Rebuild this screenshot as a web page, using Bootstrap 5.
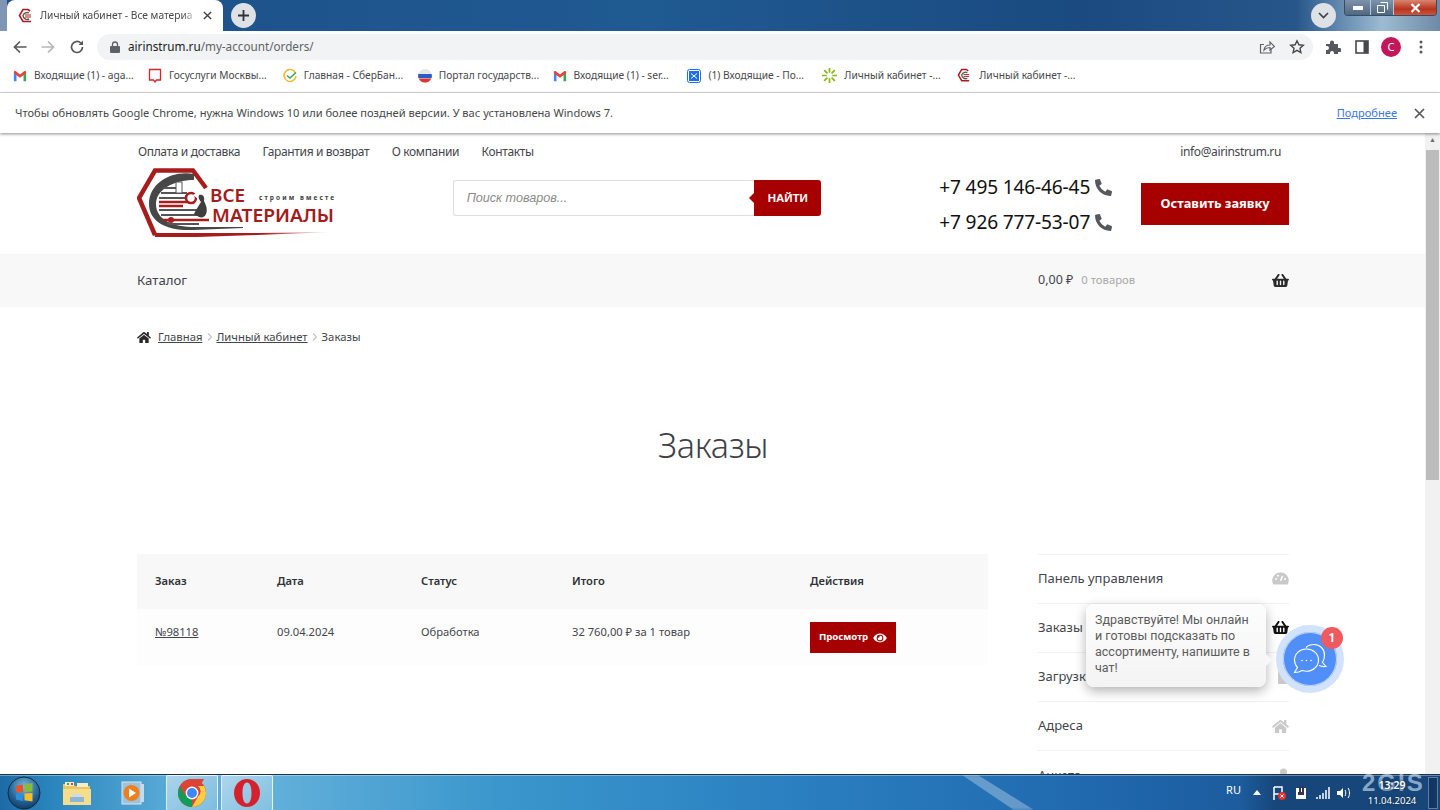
<!DOCTYPE html>
<html lang="ru">
<head>
<meta charset="UTF-8" />
<meta name="viewport" content="width=device-width, initial-scale=1.0" />
<title>Заказы</title>
<link rel="stylesheet" href="https://cdn.jsdelivr.net/npm/bootstrap@5.3.0/dist/css/bootstrap.min.css" />
<style>
  html, body { height: 810px; overflow: hidden; }
  body { font-family: "Noto Sans", "Liberation Sans", sans-serif; background: #fff; color: #43454b; }
  .screen { height: 810px; }

  /* browser frame */
  .tabstrip { height: 31px; background: linear-gradient(90deg, #7f95b4 0, #7f95b4 7px, #1d4f88 7px, #1f5a91 45%, #1a4a80 75%, #26568a 90%, #9dbbd2 96%, #6e8aa6 100%); }
  .tab-active { width: 216px; height: 31px; margin-left: 7px; background: #fff; border-radius: 8px 8px 0 0; padding: 0 11px; font-size: 10.2px; color: #45474a; }
  .tab-title { width: 158px; margin-left: 6px; white-space: nowrap; -webkit-mask-image: linear-gradient(90deg, #000 90%, transparent); mask-image: linear-gradient(90deg, #000 90%, transparent); }
  .round-btn { width: 25px; height: 25px; border-radius: 50%; background: #dee1e6; }
  .win-btns { height: 16px; width: 93px; margin-left: 8px; margin-right: 3px; border: 1px solid #3b4a5c; border-top: 0; border-radius: 0 0 4px 4px; overflow: hidden; }
  .win-btn { background: linear-gradient(#7d93aa, #4e6782); border-right: 1px solid #b9c6d4; }
  .win-min { width: 26px; }
  .win-max { width: 23px; }
  .win-close { flex: 1; background: linear-gradient(#d9866f, #b8341f 60%, #c9553f); border: 0; }

  .toolbar { height: 29px; background: #fff; padding: 3px 0 0 12px; }
  .omnibox { width: 1216px; height: 26px; margin-left: 12px; border-radius: 13px; background: #f1f3f4; padding: 0 8px 0 13px; font-size: 11.7px; color: #5f6368; }
  .omnibox-host { color: #202124; }
  .tool-ico { width: 16px; height: 16px; }
  .fwd-ico { margin-left: 12px; }
  .reload-ico { margin-left: 13px; }
  .star-ico { margin-left: 14px; }
  .ext-ico { margin-left: 12px; }
  .panel-ico { margin-left: 13px; }
  .avatar { width: 20px; height: 20px; margin-left: 11px; background: #c2185b; color: #fff; font-size: 11px; }
  .dots-ico { margin-left: 18px; }

  .bookmarks { height: 33px; padding-left: 13px; border-bottom: 1px solid #dcdcdc; font-size: 10.2px; color: #46484c; }
  .bm-item { width: 134.9px; gap: 7px; white-space: nowrap; }

  .infobar { height: 40px; padding: 0 15px; font-size: 11.1px; color: #45474a; box-shadow: 0 1px 3px rgba(0,0,0,.45); position: relative; z-index: 2; }
  .infobar-link { color: #3b78e7; margin-right: 17px; }

  /* site */
  .page-area { height: 641px; overflow: hidden; position: relative; }
  .site { width: 1425px; overflow: hidden; }
  .scroll-track { width: 15px; background: #f1f1f1; padding: 0 1px; }
  .scroll-arrow { height: 14px; color: #6e6e6e; font-size: 7px; line-height: 14px; text-align: center; }
  .scroll-thumb { height: 330px; margin-top: 3px; background: #bcbcbc; }
  .wrap { width: 1152px; margin-left: 137px; }
  .top-links { height: 35px; font-size: 12px; letter-spacing: -.36px; color: #43454b; padding-top: 3px; }
  .top-link { margin-right: 22.5px; }
  .top-link:first-child { margin-left: 1px; }
  .head-row { height: 86px; padding-bottom: 16px; }
  .logo-box { width: 316px; }
  .search-box { width: 369px; height: 36px; margin-top: -10px; border: 1px solid #dedede; border-right: 0; border-radius: 3px; }
  .search-input { flex: 1; padding-left: 13px; font: italic 12.6px "Liberation Sans", sans-serif; color: #8b8b8b; }
  .search-btn { position: relative; width: 67px; height: 36px; margin: -1px 0; background: #a60000; color: #fff; font: bold 11.5px "Liberation Sans", sans-serif; border-radius: 0 3px 3px 0; }
  .search-btn::before { content: ""; position: absolute; left: -5px; top: 13px; border: 5px solid transparent; border-left: 0; border-right-color: #a60000; }
  .phones { width: 173px; margin-left: 118px; margin-top: 4px; font-size: 19.1px; line-height: 35px; color: #111; letter-spacing: -.15px; white-space: nowrap; }
  .phone-row { gap: 5px; }
  .cta { width: 148px; height: 42px; margin-left: 29px; margin-top: 2px; background: #a60000; color: #fff; font-size: 12.8px; font-weight: 700; }
  .cat-strip { height: 53px; background: #f8f8f8; font-size: 13.2px; }
  .cart-sum { width: 251px; font-size: 12.5px; }
  .cart-count { color: #a9a9a9; margin-left: 8px; font-size: 11.3px; }
  .crumbs { margin-top: 20px; height: 20px; font-size: 11.3px; }
  .crumbs a { color: #43454b; }
  .crumb-home { margin-right: 7px; }
  .crumb-sep { margin: 0 4.5px; }
  .page-title { margin: 77px 0 88px; height: 42px; line-height: 42px; text-align: center; font-family: "Noto Sans", sans-serif; font-weight: 300; font-size: 34.200px; color: #3f4146; letter-spacing: -.3px; }
  .orders-wrap { width: 851px; }
  .orders { table-layout: fixed; font-size: 11.2px; margin: 0; --bs-table-bg: transparent; color: #43454b; }
  .orders th, .orders td { border: 0; padding: 0 0 0 18px; color: #43454b; }
  .orders th { height: 55px; background: #f8f8f8; font-weight: 600; vertical-align: middle; color: #2f3136; }
  .orders td { height: 56px; background: #fdfdfd; padding-top: 15px; vertical-align: top; }
  .orders td a { color: #43454b; }
  .view-btn { width: 86px; height: 31px; margin-top: -2px; background: #a60000; color: #fff; font-size: 9.600px; font-weight: 700; gap: 5px; }
  .side-menu { width: 251px; font-size: 13px; }
  .side-item { height: 49.3px; border-top: 1px solid #f1f1f1; }
  .side-item:first-child { height: 48.500px; }

  /* chat widget */
  .chat-tip { position: absolute; left: 1086px; top: 471px; width: 180px; height: 83px; padding: 8px 9px; background: linear-gradient(#fdfdfd, #f4f4f4); border-radius: 8px; font: 12.5px/16px Roboto, sans-serif; color: #5c5c5c; box-shadow: 0 4px 12px rgba(0,0,0,.3); }
  .chat-tip::after { content: ""; position: absolute; right: -6px; top: 50px; border: 6px solid transparent; border-right: 0; border-left-color: #f8f8f8; }
  .chat-btn { position: absolute; left: 1276px; top: 492px; width: 68px; height: 68px; border-radius: 50%; background: #4f8ff7; border: 7px solid #d3e2fb; box-shadow: inset 0 0 0 1px #bcd3fa; }
  .chat-badge { position: absolute; left: 1321px; top: 494px; width: 22px; height: 22px; border-radius: 50%; background: #ee5a5f; color: #fff; font: bold 12px/22px Roboto, sans-serif; text-align: center; }

  /* taskbar */
  .taskbar { height: 36px; position: relative; z-index: 3; border-top: 1px solid #18344f; box-shadow: inset 0 1px 0 rgba(255,255,255,.35); background: linear-gradient(90deg, #1d6aa6 0, #2a85bd 50px, #58aad6 166px, #62b0da 270px, #3a96cc 500px, #2a7fc0 800px, #2068ae 1100px, #1c5c9e 1240px, #17477a 1275px, #17477a 100%); color: #fff; }
  .taskbar::before { content: ""; position: absolute; left: 962px; top: 0; width: 72px; height: 100%; background: rgba(255,255,255,.3); clip-path: polygon(0 0, 22% 0, 100% 100%, 72% 100%); filter: blur(1.5px); }
  .orb-slot { width: 48px; }
  .folder-slot { width: 58px; }
  .player-slot { width: 54px; margin-right: 6px; }
  .task-slot { width: 52px; height: 36px; }
  .task-on { border: 1px solid rgba(255,255,255,.75); border-radius: 2px; background: linear-gradient(135deg, rgba(255,255,255,.5), rgba(255,255,255,.2)); margin-right: 3px; }
  .tray { position: relative; z-index: 1; margin-left: auto; font-size: 11px; padding-right: 2px; }
  .tray-lang { margin-bottom: 4px; }
  .tray-caret { margin-left: 12px; }
  .tray-flag { margin-left: 11px; }
  .tray-power { margin-left: 9px; }
  .tray-signal { margin-left: 8px; }
  .tray-volume { margin-left: 7px; }
  .clock { width: 58px; margin-left: 12px; text-align: center; font-size: 9.500px; line-height: 15px; text-shadow: 0 0 3px #123; }
  .clock-time { font-size: 10.5px; font-weight: 600; }
  .show-desk { width: 10px; height: 32px; margin-left: 7px; border: 1px solid rgba(255,255,255,.35); background: rgba(10,40,80,.5); }
  .gis-mark { position: absolute; left: 1362px; top: -3px; font: bold 24px/22px "Liberation Sans", sans-serif; letter-spacing: 2px; color: rgba(190,212,235,.7); pointer-events: none; }
</style>
</head>
<body>
<svg width="0" height="0" class="d-block">
  <defs>
    <symbol id="i-basket" viewBox="0 0 576 512"><path fill="currentColor" d="M576 216v16c0 13.255-10.745 24-24 24h-8l-26.113 182.788C514.509 462.435 494.257 480 470.37 480H105.63c-23.887 0-44.139-17.565-47.518-41.212L32 256h-8c-13.255 0-24-10.745-24-24v-16c0-13.255 10.745-24 24-24h67.341l106.78-146.821c10.395-14.292 30.407-17.453 44.701-7.058 14.293 10.395 17.453 30.408 7.058 44.701L170.477 192h235.046L326.12 82.821c-10.395-14.292-7.234-34.306 7.059-44.701 14.291-10.395 34.306-7.235 44.701 7.058L484.659 192H552c13.255 0 24 10.745 24 24zM312 392V280c0-13.255-10.745-24-24-24s-24 10.745-24 24v112c0 13.255 10.745 24 24 24s24-10.745 24-24zm112 0V280c0-13.255-10.745-24-24-24s-24 10.745-24 24v112c0 13.255 10.745 24 24 24s24-10.745 24-24zm-224 0V280c0-13.255-10.745-24-24-24s-24 10.745-24 24v112c0 13.255 10.745 24 24 24s24-10.745 24-24z"/></symbol>
    <symbol id="i-phone" viewBox="0 0 512 512"><path fill="currentColor" d="M497.39 361.8l-112-48a24 24 0 0 0-28 6.9l-49.6 60.6A370.66 370.66 0 0 1 130.6 204.11l60.6-49.6a23.94 23.94 0 0 0 6.9-28l-48-112A24.16 24.16 0 0 0 122.6.61l-104 24A24 24 0 0 0 0 48c0 256.5 207.9 464 464 464a24 24 0 0 0 23.4-18.6l24-104a24.29 24.29 0 0 0-14.01-27.6z"/></symbol>
    <symbol id="i-home" viewBox="0 0 576 512"><path fill="currentColor" d="M280.37 148.26L96 300.11V464a16 16 0 0 0 16 16l112.06-.29a16 16 0 0 0 15.92-16V368a16 16 0 0 1 16-16h64a16 16 0 0 1 16 16v95.64a16 16 0 0 0 16 16.05L464 480a16 16 0 0 0 16-16V300L295.67 148.26a12.19 12.19 0 0 0-15.3 0zM571.6 251.47L488 182.56V44.05a12 12 0 0 0-12-12h-56a12 12 0 0 0-12 12v72.61L318.47 43a48 48 0 0 0-61 0L4.34 251.47a12 12 0 0 0-1.6 16.9l25.5 31A12 12 0 0 0 45.15 301l235.22-193.74a12.19 12.19 0 0 1 15.3 0L530.9 301a12 12 0 0 0 16.9-1.6l25.5-31a12 12 0 0 0-1.7-16.93z"/></symbol>
    <symbol id="i-eye" viewBox="0 0 576 512"><path fill="currentColor" d="M572.52 241.4C518.29 135.59 410.93 64 288 64S57.68 135.64 3.48 241.41a32.4 32.4 0 0 0 0 29.19C57.71 376.41 165.07 448 288 448s230.32-71.64 284.52-177.41a32.4 32.4 0 0 0 0-29.19zM288 400a144 144 0 1 1 144-144 143.93 143.93 0 0 1-144 144zm0-240a95.31 95.31 0 0 0-25.31 3.79 47.85 47.85 0 0 1-66.9 66.9A95.78 95.78 0 1 0 288 160z"/></symbol>
    <symbol id="i-gmail" viewBox="0 0 16 16"><path fill="#4285f4" d="M1 14V4l3 2v8z"/><path fill="#34a853" d="M12 14V6l3-2v10z"/><path fill="#ea4335" d="M4 7 1 4.6V3.4C1 2.3 2.3 1.8 3 2.4L8 6.2l5-3.8c.7-.6 2-.1 2 1v1.2L12 7 8 10z"/></symbol>
    <symbol id="i-nut" viewBox="0 0 16 16"><path fill="none" stroke="#a81c1c" stroke-width="1.6" d="M12 3 10 1.5H5L1.5 7.5 5 13.5h8"/><path fill="none" stroke="#555" stroke-width="1.4" d="M11 5A4.2 4.2 0 0 0 5 7.500 4.200 4.200 0 0 0 11 11"/><path stroke="#a81c1c" d="M7 7h6M7 9h6"/></symbol>
    <symbol id="i-chevron" viewBox="0 0 5 8"><path d="M1 .5 4.500 4 1 7.500" fill="none" stroke="#c4c4c4" stroke-width="1.200"/></symbol>
  </defs>
</svg>

<div class="screen d-flex flex-column">
  <!-- вкладки -->
  <div class="tabstrip d-flex align-items-center flex-shrink-0">
    <div class="tab-active d-flex align-items-center">
      <svg width="16" height="16" class="flex-shrink-0"><use href="#i-nut"/></svg>
      <span class="tab-title">Личный кабинет - Все материа</span>
      <svg class="ms-auto flex-shrink-0" width="9" height="9" viewBox="0 0 10 10"><path d="M1 1l8 8M9 1l-8 8" stroke="#3c4043" stroke-width="1.5"/></svg>
    </div>
    <div class="round-btn d-flex align-items-center justify-content-center ms-2">
      <svg width="13" height="13" viewBox="0 0 13 13"><path d="M6.500 1v11M1 6.500h11" stroke="#303236" stroke-width="1.800"/></svg>
    </div>
    <div class="round-btn d-flex align-items-center justify-content-center ms-auto">
      <svg width="11" height="7" viewBox="0 0 11 7"><path d="M1 1l4.500 4.500L10 1" fill="none" stroke="#3c4043" stroke-width="1.600"/></svg>
    </div>
    <div class="win-btns d-flex align-self-start">
      <div class="win-btn win-min d-flex align-items-center justify-content-center"><svg width="10" height="4"><rect width="10" height="4" fill="#fff"/></svg></div>
      <div class="win-btn win-max d-flex align-items-center justify-content-center"><svg width="11" height="11" viewBox="0 0 11 11"><path d="M3.500 .5h7v7M.5 3.500h7v7h-7z" fill="none" stroke="#fff"/></svg></div>
      <div class="win-btn win-close d-flex align-items-center justify-content-center"><svg width="11" height="10" viewBox="0 0 11 10"><path d="M1.500 1l8 8M9.500 1l-8 8" stroke="#fff" stroke-width="2.200"/></svg></div>
    </div>
  </div>

  <!-- адресная строка -->
  <div class="toolbar d-flex align-items-center flex-shrink-0">
    <svg class="tool-ico" viewBox="0 0 16 16"><path d="M14.500 8H2.500M8 2.500 2.500 8 8 13.500" fill="none" stroke="#55585c" stroke-width="1.700"/></svg>
    <svg class="tool-ico fwd-ico" viewBox="0 0 16 16"><path d="M1.500 8h12M8 2.500 13.500 8 8 13.500" fill="none" stroke="#b5b7ba" stroke-width="1.700"/></svg>
    <svg class="tool-ico reload-ico" viewBox="0 0 16 16"><path d="M13.500 8A5.500 5.500 0 1 1 11.800 4" fill="none" stroke="#55585c" stroke-width="1.700"/><path d="M14 1.500V6H9.500z" fill="#55585c"/></svg>
    <div class="omnibox d-flex align-items-center">
      <svg width="10" height="12" viewBox="0 0 10 12" class="me-2"><rect y="5" width="10" height="7" rx="1" fill="#5f6368"/><path d="M2.500 5V3.500a2.500 2.500 0 0 1 5 0V5" fill="none" stroke="#5f6368" stroke-width="1.300"/></svg>
      <span><span class="omnibox-host">airinstrum.ru</span>/my-account/orders/</span>
      <svg class="tool-ico ms-auto" viewBox="0 0 16 16"><path d="M12 9.500V14H1.500V5.500H5" fill="none" stroke="#5f6368" stroke-width="1.200"/><path d="M5 11c.5-3.500 3-5 6-5V3l4.500 4.500L11 11V8.500c-2.500 0-4.500 1-6 2.500z" fill="none" stroke="#5f6368" stroke-width="1.200"/></svg>
      <svg class="tool-ico star-ico" viewBox="0 0 16 16"><path d="M8 1.800l1.900 4 4.400.5-3.300 3 .9 4.300L8 11.400l-3.900 2.200.9-4.300-3.300-3 4.400-.5z" fill="none" stroke="#45484c" stroke-width="1.400"/></svg>
    </div>
    <svg class="tool-ico ext-ico" viewBox="0 0 16 16"><path d="M1 5h4V3.500a2 2 0 0 1 4 0V5h4v4h1.500a2 2 0 0 1 0 4H13v2H9v-1a2 2 0 0 0-4 0v1H1v-4h1a2 2 0 0 0 0-4H1z" fill="#55585c"/></svg>
    <svg class="tool-ico panel-ico" viewBox="0 0 16 16"><rect x="2" y="2" width="12" height="12" fill="none" stroke="#45484c" stroke-width="1.600"/><rect x="9.500" y="2" width="4.500" height="12" fill="#45484c"/></svg>
    <div class="avatar d-flex align-items-center justify-content-center rounded-circle">C</div>
    <svg class="dots-ico" width="4" height="14" viewBox="0 0 4 14"><circle cx="2" cy="2" r="1.500" fill="#55585c"/><circle cx="2" cy="7" r="1.500" fill="#55585c"/><circle cx="2" cy="12" r="1.500" fill="#55585c"/></svg>
  </div>

  <!-- закладки -->
  <div class="bookmarks d-flex align-items-center flex-shrink-0">
    <div class="bm-item d-flex align-items-center"><svg width="14" height="14"><use href="#i-gmail"/></svg><span>Входящие (1) - aga...</span></div>
    <div class="bm-item d-flex align-items-center"><svg width="14" height="16" viewBox="0 0 14 16"><path d="M1.500 1.500h11v10.500h-4l-1.500 2-1.500-2h-4z" fill="none" stroke="#d8232a" stroke-width="1.300"/></svg><span>Госуслуги Москвы...</span></div>
    <div class="bm-item d-flex align-items-center"><svg width="14" height="14" viewBox="0 0 14 14"><path d="M12.500 4A6 6 0 1 0 13 7" fill="none" stroke="#f2b632" stroke-width="1.500"/><path d="M4 6.500l3 2.500 6-5.500" fill="none" stroke="#2faa4f" stroke-width="1.500"/></svg><span>Главная - СберБан...</span></div>
    <div class="bm-item d-flex align-items-center"><svg width="14" height="14" viewBox="0 0 14 14"><circle cx="7" cy="7" r="7" fill="#e6e6e6"/><path d="M.4 5h13.200a7 7 0 0 1 0 4H.4a7 7 0 0 1 0-4z" fill="#2a5cc4"/><path d="M.7 9.500h12.600A7 7 0 0 1 .7 9.500z" fill="#d9353a"/></svg><span>Портал государств...</span></div>
    <div class="bm-item d-flex align-items-center"><svg width="14" height="14"><use href="#i-gmail"/></svg><span>Входящие (1) - ser...</span></div>
    <div class="bm-item d-flex align-items-center"><svg width="14" height="14" viewBox="0 0 14 14"><rect x=".5" y=".5" width="13" height="13" rx="2" fill="#fff" stroke="#1b6fe8"/><rect x="2" y="2" width="10" height="10" fill="#1b6fe8"/><path d="M4 4.500l3 2.500 3-2.500M4 9.500l3-2.500 3 2.500" fill="none" stroke="#fff"/></svg><span>(1) Входящие - По...</span></div>
    <div class="bm-item d-flex align-items-center"><svg width="15" height="15" viewBox="0 0 16 16"><path d="M8 0v5M8 11v5M0 8h5M11 8h5M2.300 2.300l3.500 3.500M10.200 10.200l3.500 3.500M13.700 2.300l-3.500 3.500M5.800 10.200l-3.500 3.500" stroke="#86b817" stroke-width="1.800"/></svg><span>Личный кабинет -...</span></div>
    <div class="bm-item d-flex align-items-center"><svg width="15" height="15"><use href="#i-nut"/></svg><span>Личный кабинет -...</span></div>
  </div>

  <!-- уведомление хрома -->
  <div class="infobar d-flex align-items-center flex-shrink-0">
    <span>Чтобы обновлять Google Chrome, нужна Windows 10 или более поздней версии. У вас установлена Windows 7.</span>
    <a class="infobar-link ms-auto" href="#">Подробнее</a>
    <svg width="11" height="11" viewBox="0 0 11 11"><path d="M1 1l9 9M10 1l-9 9" stroke="#55585c" stroke-width="1.700"/></svg>
  </div>

  <!-- страница -->
  <div class="page-area d-flex flex-shrink-0">
    <div class="site">
      <div class="wrap">
        <div class="top-links d-flex align-items-center">
          <span class="top-link">Оплата и доставка</span>
          <span class="top-link">Гарантия и возврат</span>
          <span class="top-link">О компании</span>
          <span class="top-link">Контакты</span>
          <span class="ms-auto me-2">info@airinstrum.ru</span>
        </div>
        <div class="head-row d-flex align-items-center">
          <div class="logo-box">
            <svg width="200" height="70" viewBox="0 0 200 70" class="d-block">
              <defs><linearGradient id="fade" x1="0" x2="1" y1="0" y2="0"><stop offset="0" stop-color="#a81c1c"/><stop offset=".6" stop-color="#a81c1c"/><stop offset="1" stop-color="#a81c1c" stop-opacity="0"/></linearGradient></defs>
              <path d="M69 20 56 2.500H18L2 30 18 67" fill="none" stroke="#a81c1c" stroke-width="4.500"/>
              <path d="M17 65H120L198 64 120 67 60 69H18z" fill="url(#fade)"/>
              <path d="M57 6C36 2 12 14 12 36 12 54 30 63 56 62L106 60V59H58C36 59 19 52 19 36 19 22 36 12 57 12z" fill="#474747"/>
              <path d="M26 20H44M24 25H50M22 30H50M22 42H60M24 47H66M30 56H62" stroke="#555" stroke-width="2.200"/>
              <path d="M22 34H58M22 38H46M26 52H72" stroke="#a81c1c" stroke-width="2.400"/>
              <rect x="39" y="14" width="6" height="11" fill="#fff" stroke="#555"/>
              <circle cx="54" cy="30" r="5" fill="#fff" stroke="#a81c1c" stroke-width="2.600"/>
              <path d="M56 27l5-3v7z" fill="#fff"/>
              <circle cx="34" cy="52" r="3" fill="#a81c1c"/>
              <path d="M62 27c4-1 6 2 5 6 2 4 4 9 2 13-1 3-4 4-7 3l-5-3 2-4 5-8c-2-2-3-5-2-7z" fill="#3e3e3e"/>
              <text x="73" y="34" textLength="35" lengthAdjust="spacingAndGlyphs" font-family="Noto Sans, sans-serif" font-size="18" font-weight="600" fill="#a31c1c">ВСЕ</text>
              <text x="122" y="32" textLength="75" lengthAdjust="spacing" font-family="Noto Sans, sans-serif" font-size="6.500" font-weight="700" fill="#3e3e3e">строим вместе</text>
              <text x="75" y="54" textLength="122" lengthAdjust="spacingAndGlyphs" font-family="Noto Sans, sans-serif" font-size="18" font-weight="600" fill="#a31c1c">МАТЕРИАЛЫ</text>
            </svg>
          </div>
          <div class="search-box d-flex align-items-center">
            <span class="search-input">Поиск товаров...</span>
            <span class="search-btn d-flex align-items-center justify-content-center">НАЙТИ</span>
          </div>
          <div class="phones">
            <div class="phone-row d-flex align-items-center">+7 495 146-46-45 <svg width="17" height="17"><use href="#i-phone" color="#55585c"/></svg></div>
            <div class="phone-row d-flex align-items-center">+7 926 777-53-07 <svg width="17" height="17"><use href="#i-phone" color="#55585c"/></svg></div>
          </div>
          <div class="cta d-flex align-items-center justify-content-center">Оставить заявку</div>
        </div>
      </div>

      <div class="cat-strip">
        <div class="wrap h-100 d-flex align-items-center justify-content-between">
          <span>Каталог</span>
          <div class="cart-sum d-flex align-items-center">
            <span>0,00 ₽</span><span class="cart-count">0 товаров</span>
            <svg class="ms-auto" width="17" height="15" color="#2a2a2a"><use href="#i-basket"/></svg>
          </div>
        </div>
      </div>

      <div class="wrap">
        <div class="crumbs d-flex align-items-center">
          <svg width="14" height="13" color="#2a2a2a" class="crumb-home"><use href="#i-home"/></svg>
          <a href="#">Главная</a><svg class="crumb-sep" width="5" height="8"><use href="#i-chevron"/></svg>
          <a href="#">Личный кабинет</a><svg class="crumb-sep" width="5" height="8"><use href="#i-chevron"/></svg>
          <span>Заказы</span>
        </div>
        <h1 class="page-title">Заказы</h1>
        <div class="d-flex justify-content-between align-items-start">
          <div class="orders-wrap">
            <table class="table orders">
              <colgroup><col width="122"><col width="144"><col width="151"><col width="238"><col width="196"></colgroup>
              <thead>
                <tr><th>Заказ</th><th>Дата</th><th>Статус</th><th>Итого</th><th>Действия</th></tr>
              </thead>
              <tbody>
                <tr>
                  <td><a href="#">№98118</a></td>
                  <td>09.04.2024</td>
                  <td>Обработка</td>
                  <td>32 760,00 ₽ за 1 товар</td>
                  <td><div class="view-btn d-flex align-items-center justify-content-center">Просмотр <svg width="14" height="12"><use href="#i-eye"/></svg></div></td>
                </tr>
              </tbody>
            </table>
          </div>
          <div class="side-menu">
            <div class="side-item d-flex align-items-center justify-content-between">
              <span>Панель управления</span>
              <svg width="17" height="15" viewBox="0 0 17 15"><path d="M8.500 1.500A8 8 0 0 0 1.400 13.500h14.200A8 8 0 0 0 8.500 1.500z" fill="#c9c9c9"/><path d="M8.500 10l2-5" stroke="#fff" stroke-width="1.500"/><circle cx="4" cy="8" r="1" fill="#fff"/><circle cx="13" cy="8" r="1" fill="#fff"/><circle cx="6" cy="4.800" r="1" fill="#fff"/></svg>
            </div>
            <div class="side-item d-flex align-items-center justify-content-between">
              <span>Заказы</span>
              <svg width="17" height="15" color="#111"><use href="#i-basket"/></svg>
            </div>
            <div class="side-item d-flex align-items-center justify-content-between">
              <span>Загрузки</span>
              <svg width="11" height="15" viewBox="0 0 11 15"><rect width="11" height="15" fill="#c9c9c9"/><rect x="4" y="1" width="2" height="9" fill="#fff"/></svg>
            </div>
            <div class="side-item d-flex align-items-center justify-content-between">
              <span>Адреса</span>
              <svg width="17" height="15" color="#c9c9c9"><use href="#i-home"/></svg>
            </div>
            <div class="side-item d-flex align-items-center justify-content-between">
              <span>Анкета</span>
              <svg width="11" height="15" viewBox="0 0 11 15"><circle cx="5.500" cy="4" r="3.500" fill="#c9c9c9"/><path d="M0 15c0-4 2-6 5.500-6s5.500 2 5.500 6z" fill="#c9c9c9"/></svg>
            </div>
          </div>
        </div>
      </div>
    </div>

    <div class="scroll-track">
      <div class="scroll-arrow">▲</div>
      <div class="scroll-thumb"></div>
    </div>

    <div class="chat-tip">Здравствуйте! Мы онлайн и готовы подсказать по ассортименту, напишите в чат!</div>
    <div class="chat-btn d-flex align-items-center justify-content-center">
      <svg width="34" height="32" viewBox="0 0 34 32">
        <path d="M13 4.500C15 2.500 18 1.500 21 1.500 27 1.500 31.500 6 31.500 12c0 3-.8 5.500-2 7.500L33 23.500c-3 .3-5 0-7-1" fill="none" stroke="#fff" stroke-width="1.100"/>
        <path d="M13.500 6C7 6 1.500 10.500 1.500 17c0 3 1 5.500 3 7.500L1.500 29.500c3 0 5.500-.5 7.500-2 1.500.5 3 .8 4.500.8 6.500 0 12-5 12-11.300S20 6 13.500 6z" fill="#4f8ff7" stroke="#fff" stroke-width="1.100"/>
        <circle cx="9" cy="17.500" r=".8" fill="#fff"/><circle cx="13.500" cy="17.500" r=".8" fill="#fff"/><circle cx="18" cy="17.500" r=".8" fill="#fff"/>
      </svg>
    </div>
    <div class="chat-badge">1</div>
  </div>

  <!-- панель задач -->
  <div class="taskbar d-flex align-items-center flex-grow-1">
    <div class="orb-slot d-flex align-items-center justify-content-center">
      <svg width="34" height="34" viewBox="0 0 34 34"><defs><radialGradient id="orb" cx=".5" cy=".3" r=".8"><stop offset="0" stop-color="#7fb8dc"/><stop offset=".6" stop-color="#1f5f93"/><stop offset="1" stop-color="#0b2f52"/></radialGradient></defs><circle cx="17" cy="17" r="16" fill="url(#orb)" stroke="#0c2b45"/><path d="M9 10l7-1.500v7.500l-7 .5z" fill="#e8542a"/><path d="M17.500 8.300l8-1.300v8.500l-8 .5z" fill="#86bb3c"/><path d="M9 18l7-.5v7.500l-7-1.500z" fill="#2f8fd8"/><path d="M17.500 17.500l8-.5v8.500l-8-1.300z" fill="#f5bf2a"/></svg>
    </div>
    <div class="folder-slot d-flex align-items-center justify-content-center">
      <svg width="30" height="28" viewBox="0 0 30 28"><path d="M1 5h10l2 2h15v19H1z" fill="#e8c66c"/><path d="M3 3h9v4H3zM15 4h11v4H15z" fill="#f6edc4"/><path d="M5 4h2v2H5z" fill="#3aa655"/><path d="M9 4h2v2H9z" fill="#d9433a"/><path d="M1 10h28v16H1z" fill="#f6dd8c"/><path d="M8 18h14v5H8z" fill="#8fb6d6"/><path d="M11 15h8v3h-8z" fill="#c7dcec"/></svg>
    </div>
    <div class="player-slot d-flex align-items-center justify-content-center">
      <svg width="26" height="26" viewBox="0 0 26 26"><rect x="2" y="2" width="19" height="22" fill="#9cc3de" stroke="#d7e6f0"/><rect x="21" y="4" width="3" height="18" fill="#c7dbe9"/><circle cx="11.500" cy="13" r="8" fill="#ee7f1b"/><path d="M9 8.500l7 4.500-7 4.500z" fill="#fff"/></svg>
    </div>
    <div class="task-slot task-on d-flex align-items-center justify-content-center">
      <svg width="28" height="28" viewBox="0 0 28 28"><circle cx="14" cy="14" r="14" fill="#db4437"/><path d="M14 28A14 14 0 0 1 1.900 7L8 17.500l6 .5z" fill="#0f9d58"/><path d="M2 7A14 14 0 0 1 14 0h12.100L20 10.500H14a5 5 0 0 0-6 7z" fill="#db4437"/><path d="M26.100 7A14 14 0 0 1 14 28l6-10.500A6.500 6.500 0 0 0 20 7z" fill="#ffcd40"/><circle cx="14" cy="14" r="6.400" fill="#fff"/><circle cx="14" cy="14" r="5" fill="#4285f4"/></svg>
    </div>
    <div class="task-slot task-on d-flex align-items-center justify-content-center">
      <svg width="28" height="28" viewBox="0 0 28 28"><path fill-rule="evenodd" d="M14 0C21.500 0 27 6.300 27 14S21.500 28 14 28 1 21.700 1 14 6.500 0 14 0zM14 3.500C11 3.500 9.500 8 9.500 14S11 24.500 14 24.500 18.500 20 18.500 14 17 3.500 14 3.500z" fill="#d6202c"/></svg>
    </div>
    <div class="gis-mark">2GIS</div>
    <div class="tray d-flex align-items-center">
      <span class="tray-lang">RU</span>
      <svg class="tray-caret" width="8" height="5" viewBox="0 0 8 5"><path d="M4 0l4 5H0z" fill="#fff"/></svg>
      <svg class="tray-flag" width="14" height="14" viewBox="0 0 14 14"><path d="M2 1v13M2 1h8v7H2" fill="none" stroke="#fff" stroke-width="1.500"/><circle cx="10" cy="10" r="4" fill="#e0312f"/><path d="M8.500 8.500l3 3M11.500 8.500l-3 3" stroke="#fff"/></svg>
      <svg class="tray-power" width="13" height="14" viewBox="0 0 13 14"><rect x="1" y="2" width="10" height="11" fill="#fff"/><rect x="4" y="0" width="2" height="6" fill="#335"/><rect x="7" y="0" width="2" height="6" fill="#335"/><rect x="3" y="6" width="6" height="3" fill="#335"/></svg>
      <svg class="tray-signal" width="14" height="12" viewBox="0 0 14 12"><path d="M1 10v2M4 8v4M7 6v6M10 3v9M13 0v12" stroke="#fff" stroke-width="1.500"/></svg>
      <svg class="tray-volume" width="14" height="12" viewBox="0 0 14 12"><path d="M0 4h3l3-3v10L3 8H0z" fill="#fff"/><path d="M8 3c1 1.500 1 4.500 0 6M11 1c2 2.500 2 7.500 0 10" fill="none" stroke="#fff"/></svg>
      <div class="clock"><div class="clock-time">13:29</div><div>11.04.2024</div></div>
      <div class="show-desk"></div>
    </div>
  </div>
</div>
<script src="https://cdn.jsdelivr.net/npm/bootstrap@5.3.0/dist/js/bootstrap.bundle.min.js"></script>
</body>
</html>
